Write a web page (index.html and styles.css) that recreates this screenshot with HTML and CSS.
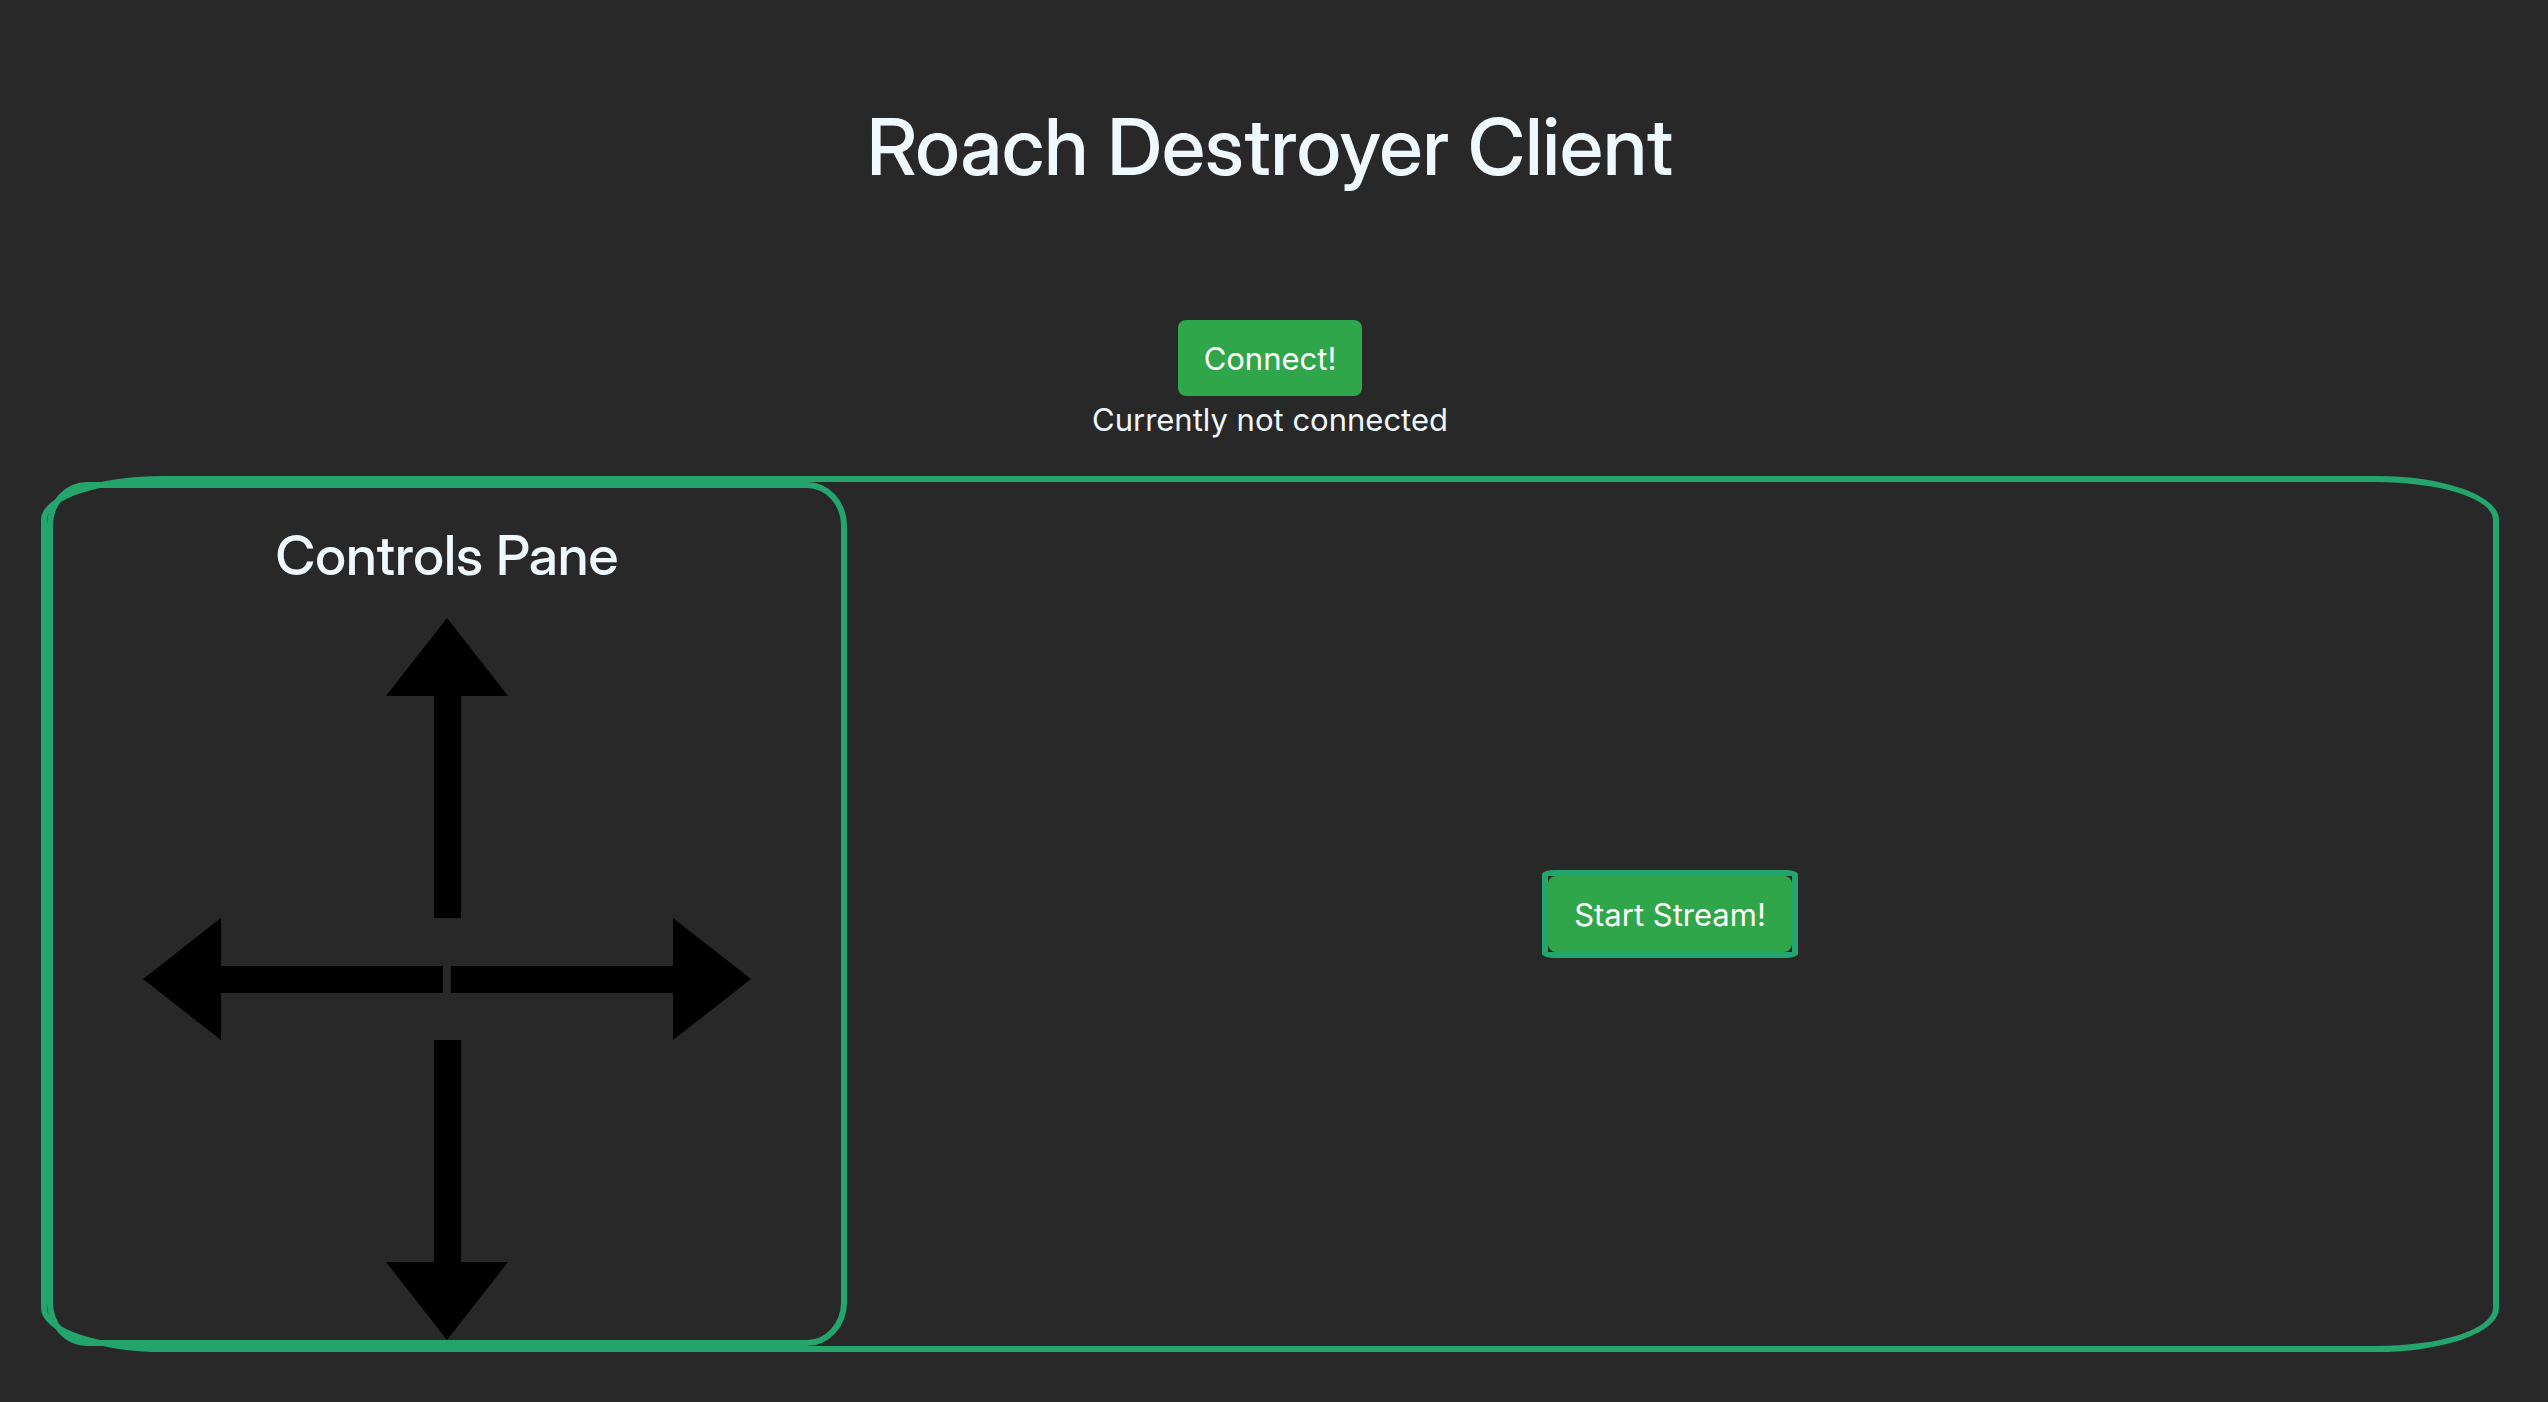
FILE: index.html
```html
<!DOCTYPE html>
<html lang="en">
<head>
<meta charset="utf-8">
<title>Roach Destroyer Client</title>
<link rel="stylesheet" href="styles.css">
</head>
<body>
<header class="header">
  <h1 class="title">Roach Destroyer Client</h1>
  <button class="btn" type="button">Connect!</button>
  <p class="status">Currently not connected</p>
</header>
<main class="workspace">
  <section class="controls">
    <h2 class="controls-title">Controls Pane</h2>
    <button class="arrow" type="button" aria-label="Forward">
      <svg width="122" height="300" viewBox="0 0 122 300"><path d="M61 0 122 78H75V300H48V78H0Z"/></svg>
    </button>
    <div class="arrow-row">
      <button class="arrow" type="button" aria-label="Left">
        <svg width="300" height="122" viewBox="0 0 300 122"><path d="M0 61 78 0V48H300V75H78V122Z"/></svg>
      </button>
      <button class="arrow" type="button" aria-label="Right">
        <svg width="300" height="122" viewBox="0 0 300 122"><path d="M300 61 222 0V48H0V75H222V122Z"/></svg>
      </button>
    </div>
    <button class="arrow" type="button" aria-label="Backward">
      <svg width="122" height="300" viewBox="0 0 122 300"><path d="M61 300 122 222H75V0H48V222H0Z"/></svg>
    </button>
  </section>
  <section class="stream">
    <div class="stream-frame">
      <button class="btn" type="button">Start Stream!</button>
    </div>
  </section>
</main>
</body>
</html>
```
FILE: styles.css
```css
* {
  box-sizing: border-box;
}

body {
  margin: 0;
  padding: 98px 49px 48px 41px;
  background: #282828;
  color: aliceblue;
  font-family: Inter, "Liberation Sans", sans-serif;
  font-size: 31px;
  line-height: 48px;
}

h1,
h2,
p {
  margin: 0;
}

.header {
  display: flex;
  flex-direction: column;
  align-items: center;
  padding-bottom: 32px;
}

.title,
.controls-title {
  font-family: "Inter Display", Roboto, "Liberation Sans", sans-serif;
  font-weight: 500;
}

.title {
  margin-bottom: 126px;
  font-size: 79px;
  line-height: 96px;
}

.btn {
  display: block;
  padding: 15px 26px 13px;
  border: 0;
  border-radius: 8px;
  background: #30a64a;
  color: #fff;
  font: inherit;
}

.workspace {
  display: grid;
  grid-template-columns: 800px 1fr;
  border: 6px solid #24a56d;
  border-radius: 5%;
}

.controls {
  display: flex;
  flex-direction: column;
  align-items: center;
  padding-top: 33px;
  border: 6px solid #24a56d;
  border-radius: 5%;
}

.controls-title {
  margin-bottom: 29px;
  font-size: 55px;
  line-height: 68px;
}

.arrow {
  padding: 0;
  border: 0;
  background: none;
}

.arrow svg {
  display: block;
}

.arrow-row {
  display: flex;
  gap: 8px;
}

.stream {
  display: flex;
  align-items: center;
  justify-content: center;
}

.stream-frame {
  border: 6px solid #24a56d;
  border-radius: 5%;
}
```
